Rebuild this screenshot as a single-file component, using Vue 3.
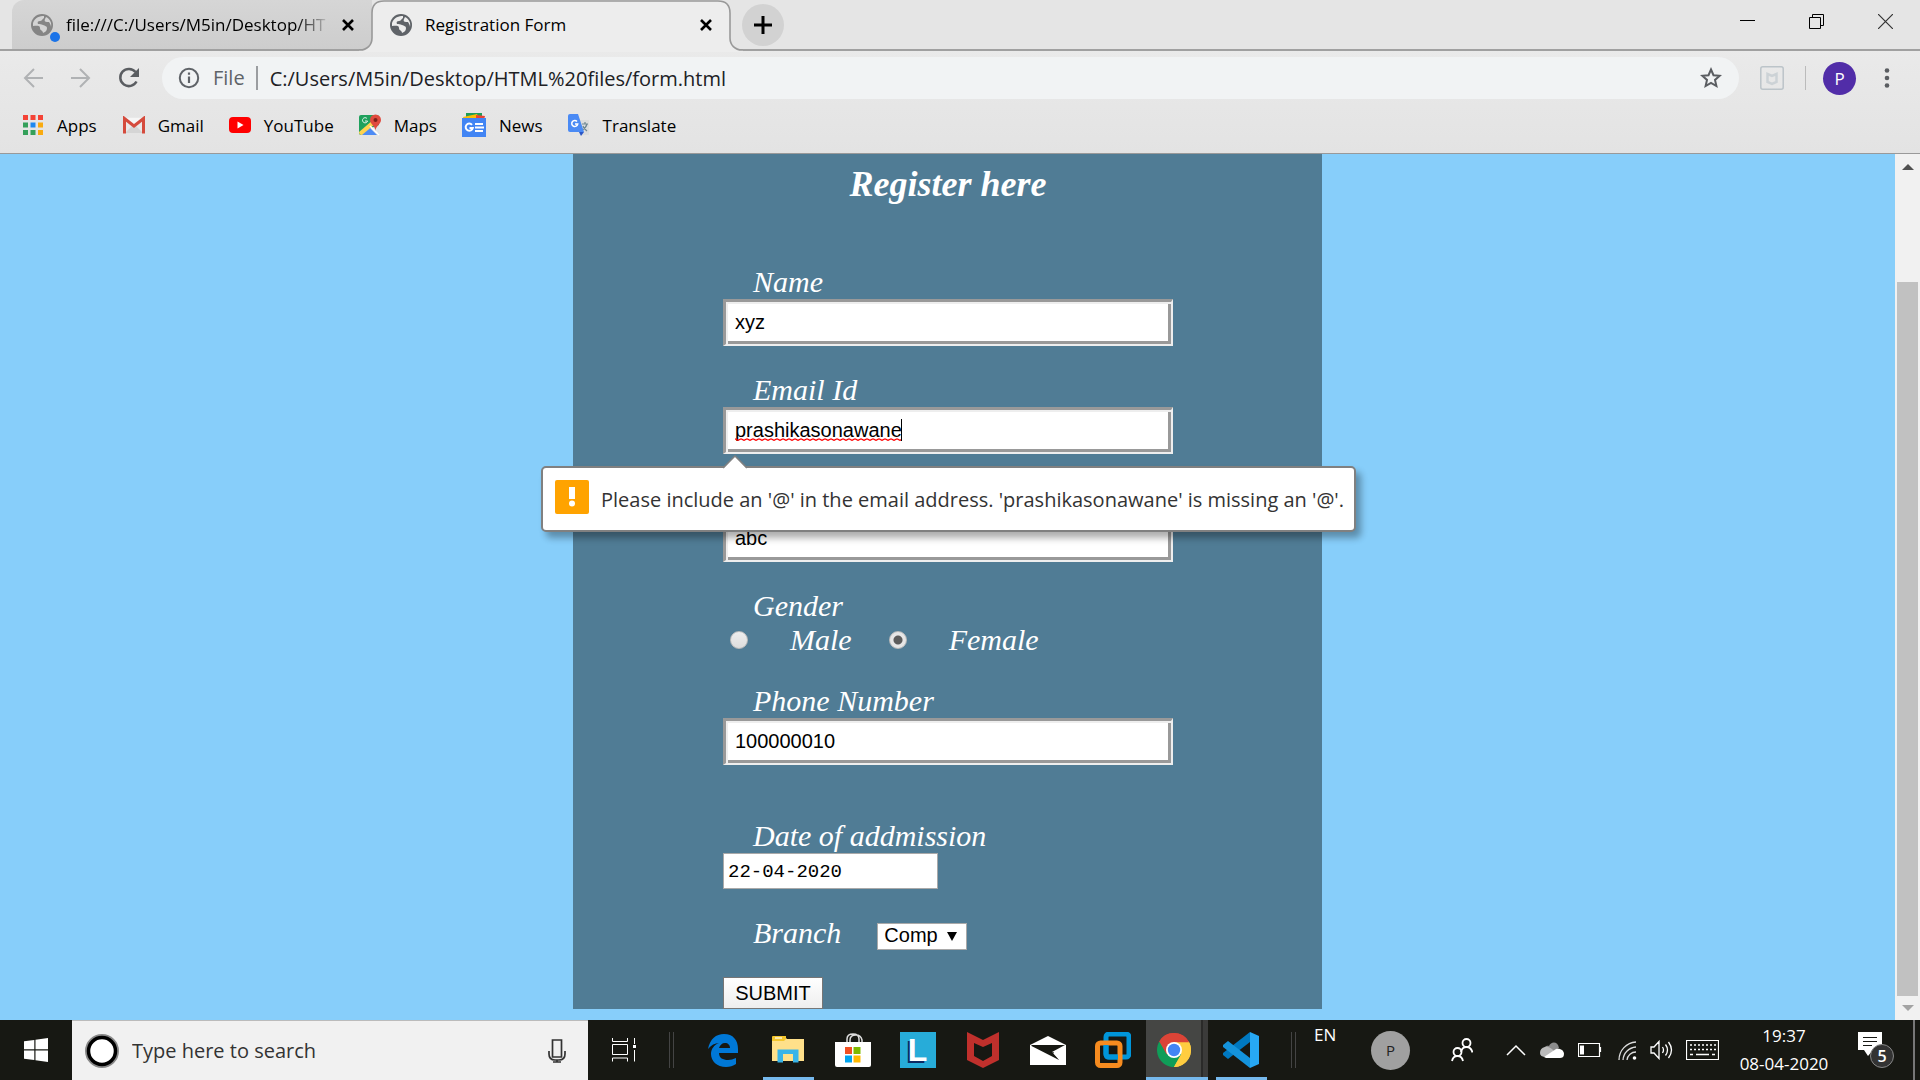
<script setup>
import { ref } from 'vue'

const name = ref('xyz')
const email = ref('prashikasonawane')
const username = ref('abc')
const gender = ref('female')
const phone = ref('100000010')
const admission = ref('22-04-2020')
const branch = ref('Comp')
const search = ref('')
</script>

<template>
  <div class="desktop">
    <header class="browser">
      <div class="tabstrip">
        <div class="tab idle">
          <span class="favicon">
            <svg width="22" height="22" viewBox="0 0 22 22"><circle cx="11" cy="11" r="11" fill="#858585" /><path d="M2 12c3 0 7-1 7 2s3 2 3 5c3-1 4-3 4-5s-2-2-4-3-3-1-5-1c-1-2 0-3 2-3s2-2 4-3V2C9 2 4 3 2 9zM14 5c-1 2 0 3 2 3h2c1 2 2 3 2 5 1-4-1-8-5-10z" fill="#d4d4d4" /></svg>
            <i class="dot"></i>
          </span>
          <span class="title">file:///C:/Users/M5in/Desktop/HT</span>
          <button class="close" aria-label="Close tab"><svg width="14" height="14" viewBox="0 0 14 14"><path d="M2 2l10 10M12 2L2 12" stroke="#000" stroke-width="2.6" /></svg></button>
        </div>
        <div class="tab active">
          <svg class="shape" width="384" height="52" viewBox="0 0 384 52"><path d="M0 52V50H1C8 50 13 45 13 38V13Q13 1 25 1H359Q371 1 371 13V38C371 45 376 50 383 50H384V52Z" fill="#ededed" /><path d="M0 50H1C8 50 13 45 13 38V13Q13 1 25 1H359Q371 1 371 13V38C371 45 376 50 383 50H384" fill="none" stroke="#999" stroke-width="1.6" /></svg>
          <span class="favicon">
            <svg width="22" height="22" viewBox="0 0 22 22"><circle cx="11" cy="11" r="11" fill="#5f6368" /><path d="M2 12c3 0 7-1 7 2s3 2 3 5c3-1 4-3 4-5s-2-2-4-3-3-1-5-1c-1-2 0-3 2-3s2-2 4-3V2C9 2 4 3 2 9zM14 5c-1 2 0 3 2 3h2c1 2 2 3 2 5 1-4-1-8-5-10z" fill="#ededed" /></svg>
          </span>
          <span class="title">Registration Form</span>
          <button class="close" aria-label="Close tab"><svg width="14" height="14" viewBox="0 0 14 14"><path d="M2 2l10 10M12 2L2 12" stroke="#000" stroke-width="2.6" /></svg></button>
        </div>
        <button class="newtab" aria-label="New tab"><svg width="18" height="18" viewBox="0 0 18 18"><path d="M9 0v18M0 9h18" stroke="#000" stroke-width="3" /></svg></button>
        <div class="winbtns">
          <button aria-label="Minimize"><svg width="15" height="15" viewBox="0 0 15 15"><path d="M0 6.5h15" stroke="#000" /></svg></button>
          <button aria-label="Restore"><svg width="15" height="15" viewBox="0 0 15 15"><path d="M.5 3.5h11v11H.5zM3.5 3.5v-3h11v11h-3" fill="none" stroke="#000" /></svg></button>
          <button aria-label="Close"><svg width="15" height="15" viewBox="0 0 15 15"><path d="M0 0l15 15M15 0L0 15" stroke="#333" stroke-width="1.2" /></svg></button>
        </div>
      </div>

      <div class="toolbar">
        <button class="nav" aria-label="Back"><svg width="20" height="20" viewBox="0 0 20 20"><path d="M20 10H2M11 1L2 10l9 9" fill="none" stroke="#b0b2b4" stroke-width="2" /></svg></button>
        <button class="nav" aria-label="Forward"><svg width="20" height="20" viewBox="0 0 20 20"><path d="M0 10h18M9 1l9 9-9 9" fill="none" stroke="#b0b2b4" stroke-width="2" /></svg></button>
        <button class="nav" aria-label="Reload"><svg width="22" height="22" viewBox="0 0 22 22"><path d="M18.500 14.500A8.600 8.600 0 1 1 17.500 5" fill="none" stroke="#5a5d61" stroke-width="2.500" /><path d="M21 1v9h-9z" fill="#5a5d61" /></svg></button>
        <div class="omnibox">
          <svg width="22" height="22" viewBox="0 0 22 22"><circle cx="11" cy="11" r="9.200" fill="none" stroke="#5f6368" stroke-width="2" /><path d="M11 9.500v6.500M11 5.500v2.300" stroke="#5f6368" stroke-width="2.200" /></svg>
          <span class="scheme">File</span>
          <input class="url" aria-label="Address" value="C:/Users/M5in/Desktop/HTML%20files/form.html" spellcheck="false" />
          <button aria-label="Bookmark this tab"><svg width="22" height="22" viewBox="0 0 22 22"><path d="M11 2.500l2.500 5.700 6.200.600-4.700 4.100 1.400 6.100-5.400-3.200L5.600 19 7 12.900 2.300 8.800l6.200-.6z" fill="none" stroke="#5a5d61" stroke-width="2" /></svg></button>
        </div>
        <svg class="ext" width="24" height="24" viewBox="0 0 24 24"><rect x=".8" y=".8" width="22.400" height="22.400" rx="2" fill="none" stroke="#bcc4c9" stroke-width="1.500" /><path d="M7.500 8v8l4.500 2 4.500-2V8L12 10z" fill="none" stroke="#ccd2d6" stroke-width="2.500" /></svg>
        <i class="rule"></i>
        <button class="avatar">P</button>
        <button class="dots" aria-label="Menu"><svg width="6" height="22" viewBox="0 0 6 22"><g fill="#5a5d61"><circle cx="3" cy="3.500" r="2.300" /><circle cx="3" cy="11" r="2.300" /><circle cx="3" cy="18.500" r="2.300" /></g></svg></button>
      </div>

      <nav class="bookmarks">
        <a href="#" class="apps"><svg width="20" height="20" viewBox="0 0 20 20"><path d="M0 0h5v5H0zM7.500 0h5v5h-5zM15 0h5v5h-5z" fill="#f44336" /><path d="M0 7.500h5v5H0zM0 15h5v5H0zM7.500 15h5v5h-5z" fill="#34a05a" /><path d="M7.500 7.500h5v5h-5z" fill="#1e88f0" /><path d="M15 7.500h5v5h-5zM15 15h5v5h-5z" fill="#f9ab10" /></svg>Apps</a>
        <a href="#" class="gmail"><svg width="22" height="18" viewBox="0 0 22 18"><path d="M2 1h18v16H2z" fill="#e9e9e9" /><path d="M2 17l7-7h4l7 7z" fill="#d5d5d5" /><path d="M3 2h16l-8 6.500z" fill="#f6f6f6" /><path d="M1.500 17.500V2.500L11 10l9.500-7.500v15" fill="none" stroke="#d54b3d" stroke-width="3" /></svg>Gmail</a>
        <a href="#" class="youtube"><svg width="22" height="16" viewBox="0 0 22 16"><rect width="22" height="16" rx="4" fill="#f00" /><path d="M8.500 4.500l6 3.500-6 3.500z" fill="#fff" /></svg>YouTube</a>
        <a href="#" class="maps"><svg width="22" height="22" viewBox="0 0 22 22"><rect y="1" width="20" height="20" rx="2" fill="#1fa15d" /><path d="M20 11v8q0 2-2 2h-4l-5-6z" fill="#dfe3e6" /><path d="M2 21l8-8 8 8z" fill="#4d8bf5" /><path d="M0 18L14 6l2 4L3 21Q0 21 0 18z" fill="#ffd34f" /><path d="M11 12l9 9" stroke="#fff" stroke-width="1.500" /><path d="M16.500 17c0-5-5.500-7-5.500-11a5.500 5.500 0 0 1 11 0c0 4-5.500 6-5.500 11z" fill="#e04a3e" /><circle cx="16.500" cy="6" r="2" fill="#7b2219" /><path d="M8 4.500A2.600 2.600 0 1 0 8.600 7H6" fill="none" stroke="#d9f0e3" /></svg>Maps</a>
        <a href="#" class="news"><svg width="24" height="24" viewBox="0 0 24 24"><path d="M4 0h16v6H4z" fill="#1f9d57" /><path d="M1 4l14-3 3 6H2z" fill="#fbbc04" /><path d="M14 2l9 1-1 4h-8z" fill="#ea4335" /><path d="M0 5h24v19H0z" fill="#4285f4" /><path d="M10 11.800A3.600 3.600 0 1 0 10.800 15H7.500" fill="none" stroke="#fff" stroke-width="2" /><path d="M13 11h8M13 14.500h9M13 18h8" stroke="#fff" stroke-width="1.800" /></svg>News</a>
        <a href="#" class="translate"><svg width="22" height="22" viewBox="0 0 22 22"><path d="M9 6h12v15H12z" fill="#dcdcdc" /><path d="M14 10h6M17 8v2M19 10c-1 4-3 5-5 6M15 12c1 3 3 4 4 5" fill="none" stroke="#6f8792" stroke-width="1.200" /><path d="M2 0h8l6 18H2q-2 0-2-2V2q0-2 2-2z" fill="#4a8af4" /><path d="M11 18h5l-3 4z" fill="#2a56c6" /><path d="M9 7.500A3 3 0 1 0 9.700 10H7" fill="none" stroke="#fff" stroke-width="1.500" /></svg>Translate</a>
      </nav>
    </header>

    <div class="viewport">
      <main class="page">
        <form class="card" @submit.prevent>
          <h1>Register here</h1>
          <div class="field">
            <label for="name">Name</label>
            <input id="name" v-model="name" class="box" type="text" />
          </div>
          <div class="field">
            <label for="email">Email Id</label>
            <input id="email" v-model="email" class="box" type="text" spellcheck="false" />
            <svg class="squiggle" width="168" height="22" viewBox="0 0 168 22">
              <defs><pattern id="wave" width="6" height="3" patternUnits="userSpaceOnUse" y="19"><path d="M0 .7L3 2.300 6 .7" fill="none" stroke="red" stroke-width="1.300" /></pattern></defs>
              <rect y="19" width="166" height="3" fill="url(#wave)" />
              <path d="M166.500 0v22" stroke="#000" />
            </svg>
            <div class="bubble" role="alert">
              <svg class="tip" width="26" height="14" viewBox="0 0 26 14"><path d="M1 14L13 1l12 13z" fill="#fff" /><path d="M1 13L13 1l12 12" fill="none" stroke="#808080" stroke-width="1.500" /></svg>
              <svg width="34" height="34" viewBox="0 0 34 34"><rect width="34" height="34" rx="2" fill="#ffa300" /><path d="M14 7h6v12h-6z" fill="#fff" /><circle cx="17" cy="23.500" r="3" fill="#fff" /></svg>
              <span>Please include an '@' in the email address. 'prashikasonawane' is missing an '@'.</span>
            </div>
          </div>
          <div class="field unlabelled">
            <input v-model="username" class="box" type="text" aria-label="Username" />
          </div>
          <fieldset class="field">
            <legend>Gender</legend>
            <div class="radios">
              <label><input v-model="gender" type="radio" name="gender" value="male" />Male</label>
              <label><input v-model="gender" type="radio" name="gender" value="female" />Female</label>
            </div>
          </fieldset>
          <div class="field">
            <label for="phone">Phone Number</label>
            <input id="phone" v-model="phone" class="box" type="tel" />
          </div>
          <div class="field spaced">
            <label for="admission">Date of addmission</label>
            <input id="admission" v-model="admission" class="date" type="text" />
          </div>
          <div class="field row">
            <label for="branch">Branch</label>
            <span class="picker">
              <select id="branch" v-model="branch"><option>Comp</option></select>
              <svg width="10" height="10" viewBox="0 0 10 10"><path d="M0 1h10L5 10z" fill="#000" /></svg>
            </span>
          </div>
          <button class="submit" type="submit">SUBMIT</button>
        </form>
      </main>
      <div class="scrollbar">
        <svg width="12" height="6" viewBox="0 0 12 6"><path d="M0 6l6-6 6 6z" fill="#505050" /></svg>
        <div class="track"><div class="thumb"></div></div>
        <svg width="12" height="6" viewBox="0 0 12 6"><path d="M0 0l6 6 6-6z" fill="#a3a3a3" /></svg>
      </div>
    </div>

    <footer class="taskbar">
      <button class="start" aria-label="Start"><svg width="24" height="24" viewBox="0 0 24 24"><path d="M0 3.300L10.300 2v9.300H0zM11.500 1.800L24 0v11.300H11.500zM0 12.500h10.300V22L0 20.700zM11.500 12.500H24V24l-12.500-1.800z" fill="#fff" /></svg></button>
      <div class="search">
        <svg width="34" height="34" viewBox="0 0 34 34"><circle cx="17" cy="17" r="15.500" fill="none" stroke="#888" stroke-width="3" /><circle cx="17" cy="17" r="13.500" fill="#fff" stroke="#000" stroke-width="3.500" /></svg>
        <input v-model="search" type="text" aria-label="Search" placeholder="Type here to search" />
        <svg width="18" height="24" viewBox="0 0 18 24"><path d="M4.500 1h9v17h-9zM1 12v3q0 6 6 6h4q6 0 6-6v-3M9 21v2.500M5 23h8" fill="none" stroke="#333" stroke-width="1.700" /></svg>
      </div>
      <button class="app view" aria-label="Task view"><svg width="24" height="24" viewBox="0 0 24 24"><path d="M.5 0v3.500h15V0M.5 6.500h15v10H.5zM.5 23.500V20h15v3.500M22.500 0v6M22.500 12v11.500" fill="none" stroke="#fff" /><path d="M21 7h3v3h-3z" fill="#fff" /></svg></button>
      <i class="grip"></i>
      <div class="apps-row">
        <button class="app" aria-label="Edge"><svg width="32" height="34" viewBox="0 0 32 34"><path d="M1 16C3 6 9 1 17 1c9 0 14 6 14 15v4H12c0 5 4 7 9 7 3 0 5-1 8-2v6c-3 2-6 3-10 3-9 0-15-6-15-13 0-5 3-9 8-11-4 0-8 2-11 6zM12 15h11c0-3-2-5-5-5s-5 2-6 5z" fill="#0078d7" /></svg></button>
        <button class="app running" aria-label="File Explorer"><svg width="32" height="28" viewBox="0 0 32 28"><path d="M0 1h13l2 2h17v22H0z" fill="#ffe08a" /><path d="M0 4V1q0-1 1-1h13v3l-2 2H0z" fill="#f4c62e" /><path d="M3 2h7" stroke="#fff" stroke-width="1.200" /><path d="M5.500 13.500h21v13H21v-8.500H11v8.500H5.500z" fill="#39b4e8" /></svg></button>
        <button class="app" aria-label="Store"><svg width="36" height="34" viewBox="0 0 36 34"><path d="M12 10V6q0-5 6-5t6 5v4M15 10V7q0-5 6-5 5 0 6 5v3" fill="none" stroke="#ddd" stroke-width="1.500" /><path d="M0 9h36v23q0 2-2 2H2q-2 0-2-2z" fill="#fff" /><path d="M10 14h7v7h-7z" fill="#f25022" /><path d="M18.500 14h7v7h-7z" fill="#7fba00" /><path d="M10 22.500h7v7h-7z" fill="#00a4ef" /><path d="M18.500 22.500h7v7h-7z" fill="#ffb900" /></svg></button>
        <button class="app" aria-label="Lenovo Vantage"><span class="lenovo">L</span></button>
        <button class="app" aria-label="McAfee"><svg width="32" height="36" viewBox="0 0 32 36"><path d="M0 0l16 8L32 0v28l-16 8-16-8zM7 11v13l9 5 9-5V11l-9 4z" fill="#c0302c" fill-rule="evenodd" /></svg></button>
        <button class="app" aria-label="Mail"><svg width="36" height="29" viewBox="0 0 36 29"><path d="M0 9L18 0l18 9v20H0z" fill="#fff" /><path d="M1.500 9H35L22 16l7 8L1.500 10z" fill="#171813" /><path d="M20 17l4-1-1 2 6 6z" fill="#171813" /></svg></button>
        <button class="app" aria-label="VMware"><svg width="36" height="36" viewBox="0 0 36 36"><rect x="11" y="2" width="23" height="23" rx="3" fill="none" stroke="#0095da" stroke-width="5" /><rect x="2.500" y="11" width="22.500" height="22.500" rx="3" fill="none" stroke="#f68b1f" stroke-width="5" /><path d="M11 13v9q0 3 3 3h9" fill="none" stroke="#0095da" stroke-width="5" /></svg></button>
        <button class="app running current" aria-label="Chrome"><svg width="34" height="34" viewBox="0 0 34 34"><path d="M17 17L2.300 8.500A17 17 0 0 1 31.700 8.500z" fill="#db4437" /><path d="M17 17L2.300 8.500A17 17 0 0 0 17 34z" fill="#0f9d58" /><path d="M17 17V34A17 17 0 0 0 31.700 8.500H17z" fill="#ffcd40" /><path d="M9.600 21L17 34l7.400-13z" fill="#0f9d58" /><path d="M24.400 21L17 34A17 17 0 0 0 32 9H17z" fill="#ffcd40" /><path d="M2.300 8.500A17 17 0 0 1 32 9.200H17L9.600 21.300z" fill="#db4437" /><circle cx="17" cy="17" r="8" fill="#fff" /><circle cx="17" cy="17" r="6.200" fill="#4285f4" /></svg></button>
        <button class="app running" aria-label="Visual Studio Code"><svg width="36" height="36" viewBox="0 0 36 36"><path d="M27 0v10L5 27l-5-4v-2z" fill="#0078c0" /><path d="M27 36V26L5 9l-5 4v2z" fill="#1493dc" /><path d="M27 0l9 4v28l-9 4z" fill="#27a8f4" /></svg></button>
      </div>
      <i class="grip wide"></i>
      <span class="lang">EN</span>
      <span class="spacer"></span>
      <span class="user">P</span>
      <div class="tray">
        <svg width="22" height="24" viewBox="0 0 22 24"><g fill="none" stroke="#fff" stroke-width="1.800"><circle cx="15.500" cy="5" r="4" /><path d="M10 14q1-5 5.500-5t6 5.500" /><circle cx="6.500" cy="14" r="4" /><path d="M1 23q1-5 5.500-5t5.500 5" /></g></svg>
        <svg width="20" height="12" viewBox="0 0 20 12"><path d="M1 11l9-9 9 9" fill="none" stroke="#fff" stroke-width="1.500" /></svg>
        <svg width="24" height="17" viewBox="0 0 24 17"><path d="M4 11C2 5 7 3 9 4c2-5 9-5 10 2l-9 5z" fill="#8c8c8c" /><path d="M0 11q0-5 5-6 4-1 9 4l-8 6q-6 0-6-4z" fill="#bbb" /><path d="M4 15l12-8c5-1 8 2 8 5s-2 4-4 4H6z" fill="#fff" /></svg>
        <svg width="24" height="14" viewBox="0 0 24 14"><path d="M.5.500h21v13H.500zM22.500 4v5" fill="none" stroke="#fff" stroke-width="1.200" /><path d="M2 2.500h4v9H2z" fill="#fff" /></svg>
        <svg width="19" height="19" viewBox="0 0 19 19"><g fill="none" stroke="#ddd" stroke-width="1.300"><path d="M1 19A18 18 0 0 1 18 1M5 19A14 14 0 0 1 18 6M9 19a9 9 0 0 1 9-8" /></g><circle cx="16.500" cy="17" r="1.800" fill="#fff" /></svg>
        <svg width="23" height="20" viewBox="0 0 23 20"><path d="M1 7h3l5-5.500v17L4 13H1zM12.500 7q2 3 0 6M15.500 4.500q4 5.500 0 11M18.500 2q6 8 0 16" fill="none" stroke="#fff" stroke-width="1.300" /></svg>
        <svg width="33" height="20" viewBox="0 0 33 20"><path d="M.5.500h32v19H.500z" fill="none" stroke="#fff" stroke-width="1.200" /><path d="M4 5h26M4 9.500h26" stroke="#fff" stroke-width="1.300" stroke-dasharray="2 2" /><path d="M4 14.500h3M10 14.500h13M26 14.500h3" stroke="#fff" stroke-width="1.300" /></svg>
      </div>
      <div class="clock"><span>19:37</span><span>08-04-2020</span></div>
      <button class="notes" aria-label="Notifications"><svg width="24" height="24" viewBox="0 0 24 24"><path d="M0 0h24v18H15l-5 6-4-6H0z" fill="#fff" /><path d="M5 5.500h14M5 9.500h14M5 13.500h9" stroke="#171813" stroke-width="1.200" /></svg><span>5</span></button>
      <i class="peek"></i>
    </footer>
  </div>
</template>

<style>
html, body { margin: 0; }
</style>

<style scoped>
* { box-sizing: border-box; }
.desktop {
  display: flex; flex-direction: column; min-height: 100vh;
  font-family: "Open Sans", "Noto Sans", sans-serif; font-size: 17px; color: #000;
}
svg { display: block; flex: none; }
button { padding: 0; border: 0; background: none; font: inherit; color: inherit; display: flex; align-items: center; justify-content: center; }
input { outline: none; border-radius: 0; }
a { color: inherit; text-decoration: none; display: flex; align-items: center; }

.browser { background: linear-gradient(#ededed, #e3e3e3); border-bottom: 1px solid #999; }
.tabstrip { display: flex; height: 51px; padding-left: 12px; background: #e5e5e5; border-bottom: 2px solid #a0a0a0; }
.tab { position: relative; display: flex; align-items: center; height: 49px; padding-right: 17px; }
.idle { width: 360px; padding-left: 19px; background: linear-gradient(#d6d6d6, #cdcdcd); border-radius: 12px 0 0 0; }
.active { width: 358px; padding-left: 18px; }
.shape { position: absolute; left: -13px; top: 0; }
.favicon { position: relative; flex: none; }
.dot { position: absolute; right: -7px; bottom: -6px; width: 10px; height: 10px; border-radius: 50%; background: #1a73e8; }
.title { position: relative; flex: 1; margin: 0 8px 0 13px; white-space: nowrap; line-height: 24px; }
.idle .title { -webkit-mask-image: linear-gradient(90deg, #000 86%, transparent 99%); mask-image: linear-gradient(90deg, #000 86%, transparent 99%); }
.close { position: relative; flex: none; }
.newtab { width: 42px; height: 42px; margin: 4px 0 0 12px; border-radius: 50%; background: #d2d2d2; }
.winbtns { display: flex; margin-left: auto; height: 42px; }
.winbtns button { width: 69px; }

.toolbar { display: flex; align-items: center; height: 54px; padding: 0 16px 0 9px; }
.nav { width: 48px; height: 42px; }
.omnibox { flex: 1; display: flex; align-items: center; height: 42px; margin-left: 9px; padding: 0 17px 0 16px; border-radius: 21px; background: #f1f3f4; font-size: 20px; }
.scheme { margin-left: 13px; padding-right: 11px; border-right: 2px solid #9b9da0; line-height: 24px; color: #5f6368; }
.url { flex: 1; min-width: 0; margin-left: 12px; padding: 0; border: 0; background: none; font: inherit; color: #202124; }
.ext { margin-left: 21px; }
.rule { width: 1px; height: 24px; margin: 0 17px 0 21px; background: #bbb; }
.avatar { width: 33px; height: 33px; border-radius: 50%; background: #512da8; color: #fff; }
.dots { width: 34px; margin-left: 14px; }
.bookmarks { display: flex; height: 48px; padding: 0 0 8px 23px; gap: 25px; }
.bookmarks a { gap: 13px; }
.bookmarks .apps { gap: 14px; margin-right: 1px; }

.viewport { flex: 1; display: flex; background: #87cefa; }
.page { flex: 1; display: flex; justify-content: center; align-items: flex-start; padding-bottom: 11px; }
.card { width: 749px; padding: 10px 149px 0 150px; background: #507c95; color: #fff; font: italic 30px/34px "Liberation Serif", serif; }
h1 { margin: 0 0 61px; font-size: 36px; line-height: 40px; font-weight: bold; text-align: center; }
.field { position: relative; margin: 0 0 27px; padding: 0; border: 0; min-width: 0; }
.field > label, legend { display: block; padding: 0; margin-left: 30px; }
.unlabelled { padding-top: 34px; }
.spaced { margin-top: 54px; }
.box {
  display: block; width: 100%; height: 47px; padding: 0 9px 2px;
  border-width: 3px 2px 2px 3px; border-style: solid; border-color: #999 #eee #eee #999;
  box-shadow: inset 2px 2px #eee, inset -3px -3px #999;
  background: #fff; color: #000; font: 20px "Liberation Sans", sans-serif;
}
.squiggle { position: absolute; left: 12px; top: 46px; }
.bubble {
  position: absolute; z-index: 2; left: -182px; top: 93px; display: flex; align-items: flex-start; height: 66px; width: 815px;
  padding: 12px; border: 2px solid #808080; border-radius: 5px; background: #fff; color: #333;
  box-shadow: 5px 6px 7px rgba(0, 0, 0, .32); white-space: nowrap; font: normal 20px/40px "Open Sans", "Noto Sans", sans-serif;
}
.bubble span { margin-left: 12px; }
.tip { position: absolute; left: 179px; top: -13px; }
.radios { display: flex; gap: 37px; padding-left: 7px; }
.radios label { display: flex; align-items: center; gap: 42px; }
.radios input { appearance: none; width: 18px; height: 18px; margin: 0; border: 1px solid #bbb; border-radius: 50%; background: linear-gradient(#eee, #ddd); }
.radios input:checked { background: radial-gradient(circle, #5c5c5c 0 4px, #e6e6e6 5px); }
.date { display: block; width: 215px; height: 36px; padding: 2px 4px 0; border: 1px solid #a9a9a9; background: #fff; font: 19px "Liberation Mono", monospace; color: #000; }
.row { display: flex; align-items: flex-end; }
.picker { position: relative; margin-left: 36px; }
select { appearance: none; display: block; width: 90px; height: 27px; padding: 0 7px 2px 6px; border: 1px solid #a9a9a9; border-radius: 0; background: #fff; color: #000; font: 20px/23px "Liberation Sans", sans-serif; }
.picker svg { position: absolute; right: 10px; top: 8px; pointer-events: none; }
.submit { width: 100px; height: 32px; border: 1px solid #767676; background: linear-gradient(#fff, #eee); color: #000; font: 20px "Liberation Sans", sans-serif; }

.scrollbar { width: 25px; display: flex; flex-direction: column; align-items: center; padding: 10px 0 9px; background: #f1f1f1; }
.track { flex: 1; width: 21px; margin: 9px 0; display: flex; flex-direction: column; }
.track::before { content: ""; flex: 103; }
.thumb { flex: 714; background: #c1c1c1; }

.taskbar { display: flex; align-items: center; height: 60px; background: #171813; color: #fff; }
.start { width: 72px; height: 60px; }
.search { display: flex; align-items: center; width: 516px; height: 60px; padding: 0 22px 0 13px; background: #f1f1f1; border-top: 1px solid #bbb; }
.search input { flex: 1; min-width: 0; margin-left: 13px; padding: 0; border: 0; background: none; font: inherit; font-size: 20px; }
.search input::placeholder { color: #333; opacity: 1; }
.app { position: relative; width: 65px; height: 60px; }
.view { width: 72px; }
.grip { width: 5px; height: 36px; margin: 0 16px 0 9px; border: solid #444; border-width: 0 1px; }
.wide { margin-left: 18px; }
.apps-row { display: flex; }
.running::after { content: ""; position: absolute; left: 8px; right: 6px; bottom: 0; height: 3px; background: #76b9ed; }
.current { width: 62px; margin-left: 1px; padding-right: 6px; background: linear-gradient(90deg, #454644 0 55px, #2a2a29 55px 57px, #3b3b3a 57px); }
.current::after { left: 0; right: 0; }
.lenovo { width: 36px; height: 36px; background: #27acd9; color: #fff; font: bold 32px/36px "Liberation Sans", sans-serif; text-shadow: -2px 2px #0b2a63; }
.lang { align-self: flex-start; margin-top: 3px; margin-left: 2px; }
.spacer { flex: 1; }
.user { width: 39px; height: 39px; border-radius: 50%; background: #a0a0a0; color: #222; font-size: 15px; line-height: 39px; text-align: center; }
.tray { display: flex; align-items: center; gap: 14px; margin-left: 41px; }
.tray svg:nth-child(2) { margin-left: 19px; }
.tray svg:nth-child(5) { margin-left: 2px; }
.tray svg:nth-child(6) { margin-left: -1px; }
.tray svg:nth-child(7) { margin-left: -1px; }
.clock { display: flex; flex-direction: column; align-items: center; width: 94px; margin-left: 18px; line-height: 28px; }
.notes { position: relative; width: 36px; height: 36px; margin: 0 19px 0 27px; justify-content: flex-start; align-items: flex-start; }
.notes span { position: absolute; right: 0; bottom: 0; width: 24px; height: 24px; border: 1px solid #888; border-radius: 50%; background: #333; font-size: 16px; line-height: 22px; font-weight: 600; text-align: center; }
.peek { width: 7px; height: 60px; border-left: 2px solid #777; }
</style>
